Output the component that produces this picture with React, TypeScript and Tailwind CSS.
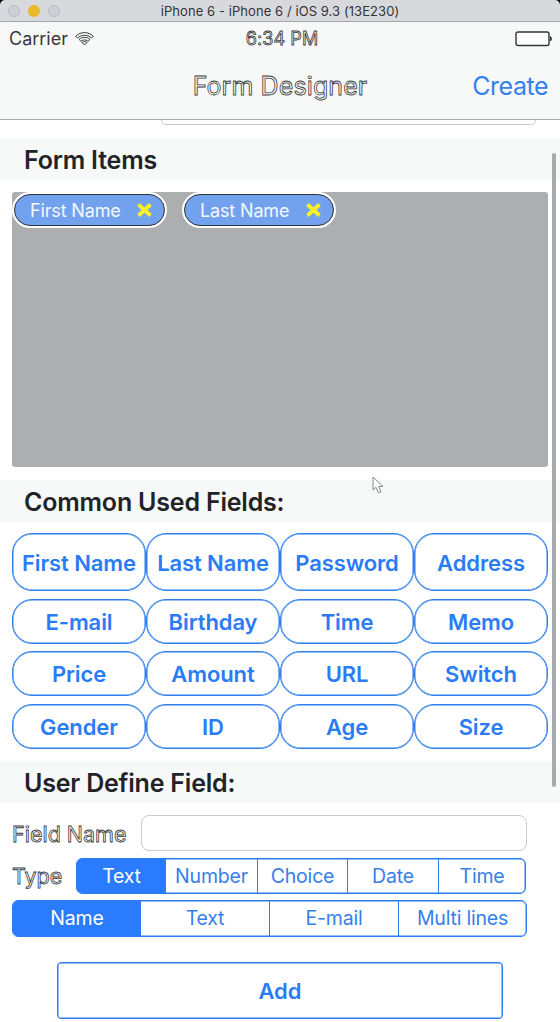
import React from 'react';

const rows = [
  { cls: 'h-[58px]', items: ['First Name', 'Last Name', 'Password', 'Address'] },
  { cls: 'h-[45px]', items: ['E-mail', 'Birthday', 'Time', 'Memo'] },
  { cls: 'h-[45px]', items: ['Price', 'Amount', 'URL', 'Switch'] },
  { cls: 'h-[45px]', items: ['Gender', 'ID', 'Age', 'Size'] },
];

function SectionHeader({ title, className }: { title: string; className: string }) {
  return (
    <h2 className={`flex h-[42px] shrink-0 items-center bg-[#f7f9f9] pl-6 text-[25px] font-semibold tracking-[-0.2px] text-[#222326] ${className}`}>
      {title}
    </h2>
  );
}

function Chip({ label, className }: { label: string; className: string }) {
  return (
    <div className={`flex h-9 items-center rounded-full border-2 border-white bg-white ${className}`}>
      <div className="flex h-8 w-full items-center justify-between rounded-full border border-[#333437] bg-[#72a2ed] pr-[11px] pl-[15px] text-[18px] tracking-[-0.15px] text-[#f4f8ff]">
        <span className="whitespace-nowrap">{label}</span>
        <svg width="17" height="16" viewBox="0 0 17 16" className="shrink-0">
          <path d="M2.5 2.5 L14.5 13.5 M14.5 2.5 L2.5 13.5" stroke="#fff01f" strokeWidth="3.8" />
        </svg>
      </div>
    </div>
  );
}

function Segments({ items, className }: { items: { label: string; w: string }[]; className: string }) {
  return (
    <div className={`flex overflow-hidden rounded-md border border-[#2a7bf6] text-[19.5px] tracking-[-0.2px] text-[#3580ec] shadow-[inset_0_0_0_0.5px_#2a7bf6] ${className}`}>
      {items.map((it, i) => (
        <button
          key={it.label}
          className={`flex items-center justify-center pt-[2px] whitespace-nowrap ${it.w} ${
            i === 0 ? 'bg-[#2a7bfe] text-white' : i === 1 ? '' : 'border-l border-[#2a7bf6]'
          }`}
        >
          {it.label}
        </button>
      ))}
    </div>
  );
}

export default function App() {
  return (
    <div className="relative flex h-[1022px] w-[560px] flex-col overflow-hidden bg-white font-['Inter','Liberation_Sans',sans-serif]">
      <div className="bg-black">
        <header className="relative flex h-[22px] items-center justify-center rounded-t-[5px] border-b border-[#a5a6a9] bg-[#d8d9dd] pt-[3px]">
          <div className="absolute top-[5px] left-2 flex gap-2">
            <i className="size-3 rounded-full border border-[#b7bac1] bg-[#cdd0d5]" />
            <i className="size-3 rounded-full bg-[#e9b927]" />
            <i className="size-3 rounded-full border border-[#b7bac1] bg-[#cdd0d5]" />
          </div>
          <span className="text-[13px] tracking-[0.07px] text-[#333438]">iPhone 6 - iPhone 6 / iOS 9.3 (13E230)</span>
        </header>
      </div>

      <div className="flex h-[98px] shrink-0 flex-col border-b border-[#aaabad] bg-[#f7f9f9]">
        <div className="grid h-[33px] grid-cols-3 items-center pr-[7px] pl-[9px] text-[18px] text-[#38393c]">
          <div className="flex items-center gap-[7px]">
            Carrier
            <svg width="19" height="14" viewBox="0 0 19 14" fill="none" stroke="#38393c" strokeWidth="1">
              <path d="M.7 4.2C5.8-.6 13.2-.6 18.3 4.2L16.5 6C12.5 2.4 6.5 2.4 2.5 6ZM4 7.4C7.2 4.7 11.8 4.7 15 7.4L13.1 9.2C10.9 7.5 8.1 7.5 5.9 9.2ZM7 10.5C8.5 9.4 10.5 9.4 12 10.5L9.5 13Z" />
            </svg>
          </div>
          <span className="pl-[2px] text-center tracking-[0.1px] whitespace-nowrap text-[#f7f9f9] [-webkit-text-stroke:0.8px_#38393c]">6:34 PM</span>
          <svg width="38" height="16" viewBox="0 0 38 16" className="justify-self-end" fill="none" stroke="#333438">
            <rect x="1" y="1" width="33" height="13.5" rx="2" fill="#fff" strokeWidth="1.4" />
            <path d="M35.5 5.5Q38 7.8 35.5 10Z" />
          </svg>
        </div>
        <div className="grid grow grid-cols-[1fr_auto_1fr] items-center">
          <span />
          <h1 className="text-[25px] tracking-[0.1px] text-[#f7f9f9] [-webkit-text-stroke:0.8px_#38393c]">Form Designer</h1>
          <button className="justify-self-end pr-3 text-[25px] tracking-[-0.5px] text-[#3580ec]">Create</button>
        </div>
      </div>

      <div className="ml-[161px] h-[5px] w-[375px] shrink-0 rounded-b-[7px] border border-t-0 border-[#c9cad0]" />
      <SectionHeader title="Form Items" className="mt-[13px] pt-[3px]" />
      <div className="mx-3 mt-3 flex h-[275px] shrink-0 gap-[15px] rounded-[3px] bg-[#adaeb0]">
        <Chip label="First Name" className="w-[155px]" />
        <Chip label="Last Name" className="w-[154px]" />
      </div>
      <SectionHeader title="Common Used Fields:" className="mt-[13px] pt-[3px]" />
      <div className="mx-3 mt-[11px] flex shrink-0 flex-col gap-[7.5px]">
        {rows.map((row) => (
          <div key={row.items[0]} className={`grid grid-cols-4 ${row.cls}`}>
            {row.items.map((t) => (
              <button key={t} className="rounded-[20px] border border-[#2f7fec] pt-[2px] text-[22px] font-semibold tracking-[-0.1px] whitespace-nowrap text-[#2a7bf6] shadow-[inset_0_0_0_0.5px_#2f7fec]">
                {t}
              </button>
            ))}
          </div>
        ))}
      </div>
      <SectionHeader title="User Define Field:" className="mt-3 pt-[5px]" />

      <div className="mt-3 flex shrink-0 items-center pl-3">
        <label className="w-[129px] pt-[3px] text-[21.5px] whitespace-nowrap text-white [-webkit-text-stroke:0.8px_#38393c]">Field Name</label>
        <div className="h-9 w-[386px] rounded-[8px] border border-[#c9cad0]" />
      </div>
      <div className="mt-[7px] flex shrink-0 items-center pl-3">
        <label className="w-[64px] pt-px text-[21.5px] text-white [-webkit-text-stroke:0.8px_#38393c]">Type</label>
        <Segments
          className="h-9 w-[450px]"
          items={[
            { label: 'Text', w: 'w-[89px]' },
            { label: 'Number', w: 'w-[91px]' },
            { label: 'Choice', w: 'w-[90px]' },
            { label: 'Date', w: 'w-[91px]' },
            { label: 'Time', w: 'grow' },
          ]}
        />
      </div>
      <Segments
        className="mt-[6px] ml-3 h-[37px] w-[515px] shrink-0"
        items={[
          { label: 'Name', w: 'w-[128px]' },
          { label: 'Text', w: 'w-[128px]' },
          { label: 'E-mail', w: 'w-[129px]' },
          { label: 'Multi lines', w: 'grow' },
        ]}
      />
      <button className="mx-[57px] mt-[25px] h-[57px] shrink-0 rounded-[4px] border border-[#2f7fec] pt-[2px] text-[22px] font-semibold text-[#2a7bf6] shadow-[inset_0_0_0_0.5px_#2f7fec]">
        Add
      </button>

      <div className="absolute top-[153px] right-1 h-[634px] w-1 rounded-full bg-[#a9aaad]" />
      <svg className="absolute top-[476px] left-[371px]" width="14" height="19" viewBox="0 0 14 19">
        <path d="M2 1V14L5 11.3L7.4 16.8L10 15.7L7.6 10.4H12Z" fill="#fff" stroke="#85868c" strokeWidth="1" />
      </svg>
    </div>
  );
}
